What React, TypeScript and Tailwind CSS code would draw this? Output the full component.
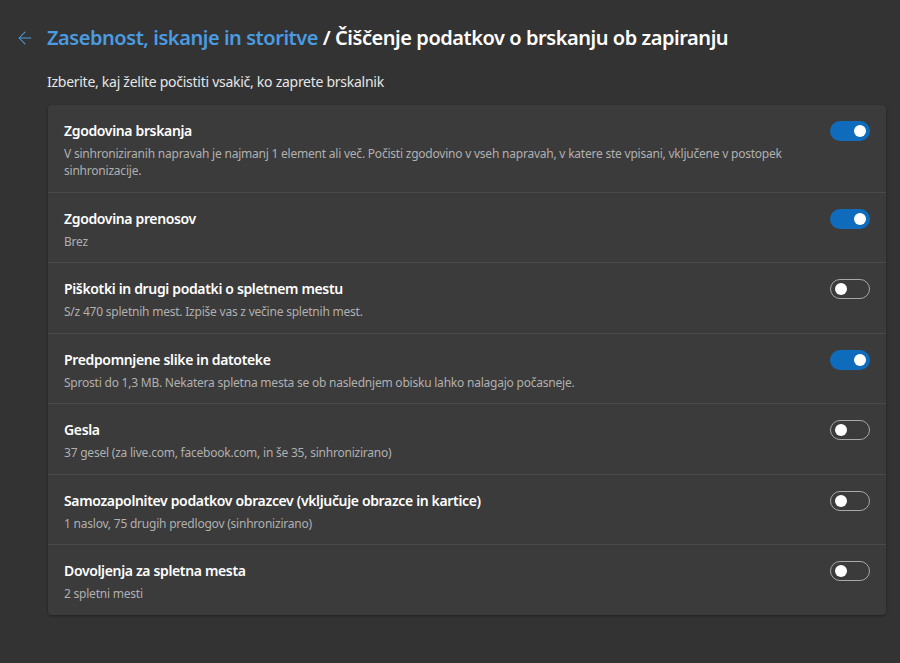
import { ArrowLeft } from "lucide-react";

type Item = { title: string; desc: string; on: boolean };

const items: Item[] = [
  {
    title: "Zgodovina brskanja",
    desc: "V sinhroniziranih napravah je najmanj 1 element ali več. Počisti zgodovino v vseh napravah, v katere ste vpisani, vključene v postopek sinhronizacije.",
    on: true,
  },
  { title: "Zgodovina prenosov", desc: "Brez", on: true },
  {
    title: "Piškotki in drugi podatki o spletnem mestu",
    desc: "S/z 470 spletnih mest. Izpiše vas z večine spletnih mest.",
    on: false,
  },
  {
    title: "Predpomnjene slike in datoteke",
    desc: "Sprosti do 1,3 MB. Nekatera spletna mesta se ob naslednjem obisku lahko nalagajo počasneje.",
    on: true,
  },
  { title: "Gesla", desc: "37 gesel (za live.com, facebook.com, in še 35, sinhronizirano)", on: false },
  {
    title: "Samozapolnitev podatkov obrazcev (vključuje obrazce in kartice)",
    desc: "1 naslov, 75 drugih predlogov (sinhronizirano)",
    on: false,
  },
  { title: "Dovoljenja za spletna mesta", desc: "2 spletni mesti", on: false },
];

function Toggle({ on }: { on: boolean }) {
  if (on) {
    return (
      <div className="flex h-5 w-10 shrink-0 items-center justify-end rounded-full bg-[#0f6cbd] pr-[4px]">
        <div className="h-3 w-3 rounded-full bg-white" />
      </div>
    );
  }
  return (
    <div className="flex h-5 w-10 shrink-0 items-center rounded-full border border-[#a8a8a8] pl-[4px]">
      <div className="h-3 w-3 rounded-full bg-white" />
    </div>
  );
}

export default function App() {
  return (
    <div
      className="min-h-[663px] bg-[#333333] text-white"
      style={{ fontFamily: '"Noto Sans", "Open Sans", sans-serif' }}
    >
      <div className="flex items-center pl-[15px] pt-[24px]">
        <ArrowLeft className="h-5 w-5 text-[#4a9be0]" strokeWidth={1.25} />
        <h1 className="ml-[12px] text-[20px] font-semibold leading-[28px] tracking-[-0.45px]">
          <span className="text-[#4a9be0]">Zasebnost, iskanje in storitve</span>
          <span className="text-white"> / Čiščenje podatkov o brskanju ob zapiranju</span>
        </h1>
      </div>
      <p className="ml-[47px] mt-[20px] text-[14px] leading-[20px] tracking-[-0.27px] text-[#e6e6e6]">
        Izberite, kaj želite počistiti vsakič, ko zaprete brskalnik
      </p>
      <div className="ml-[48px] mr-[14px] mt-[13px] rounded-[4px] bg-[#3b3b3b] shadow-[0_1px_3px_rgba(0,0,0,0.35)]">
        {items.map((it, i) => (
          <div
            key={it.title}
            className={
              "flex items-start justify-between pl-4 pr-4 pt-4 pb-[12.5px]" +
              (i > 0 ? " border-t border-[#4a4a4a]" : "")
            }
          >
            <div className="min-w-0 flex-1 pr-6">
              <div className="text-[14px] font-semibold leading-[20px] tracking-[-0.35px] text-white">
                {it.title}
              </div>
              <div className="mt-[4px] text-[12px] leading-[17px] tracking-[-0.22px] text-[#b0b0b0]">
                {it.desc}
              </div>
            </div>
            <Toggle on={it.on} />
          </div>
        ))}
      </div>
    </div>
  );
}
